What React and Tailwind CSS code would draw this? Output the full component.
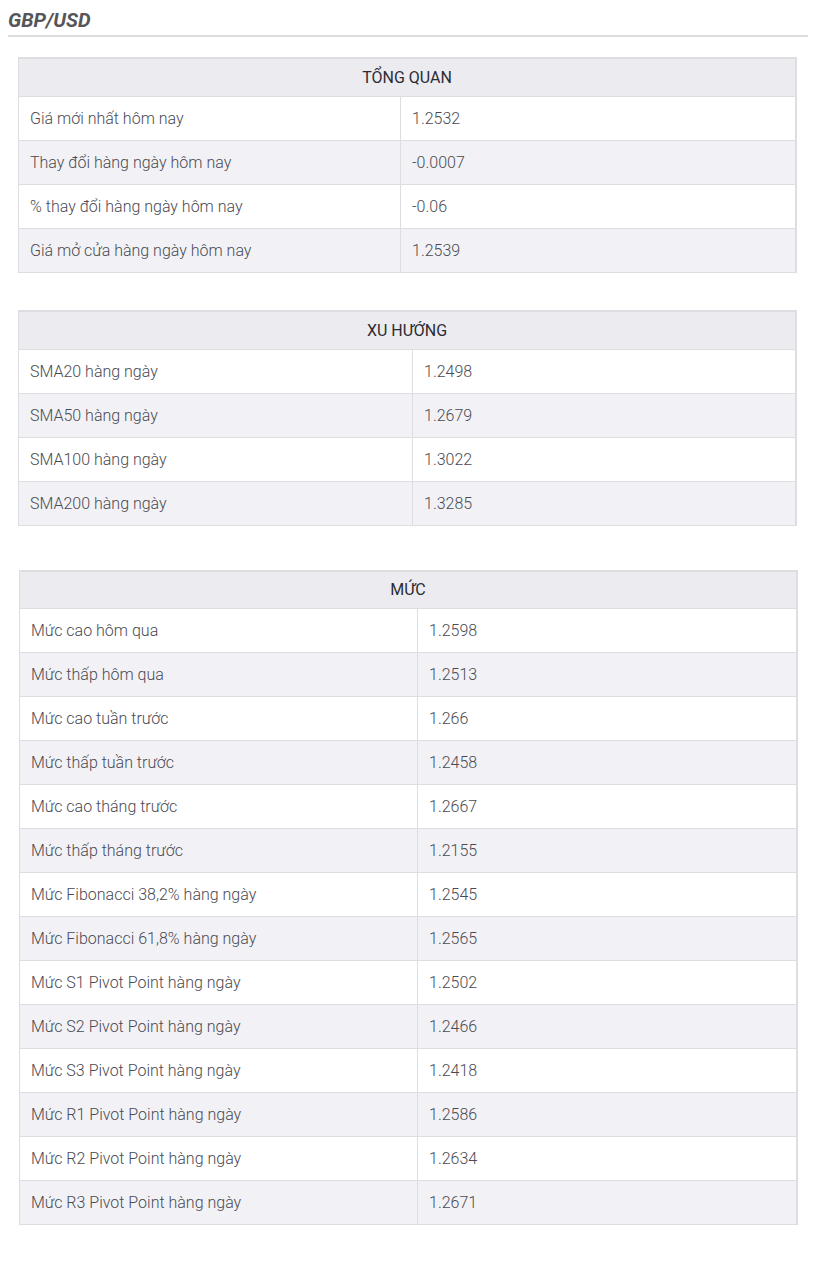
import React from 'react';

const SECTIONS = [
  {
    title: 'TỔNG QUAN',
    wrap: 'ml-[18px] w-[779px] mt-[20px]',
    head: 'h-[38px]',
    col: 'w-[382px]',
    rows: [
      ['Giá mới nhất hôm nay', '1.2532'],
      ['Thay đổi hàng ngày hôm nay', '-0.0007'],
      ['% thay đổi hàng ngày hôm nay', '-0.06'],
      ['Giá mở cửa hàng ngày hôm nay', '1.2539'],
    ],
  },
  {
    title: 'XU HƯỚNG',
    wrap: 'ml-[18px] w-[779px] mt-[37px]',
    head: 'h-[38px]',
    col: 'w-[394px]',
    rows: [
      ['SMA20 hàng ngày', '1.2498'],
      ['SMA50 hàng ngày', '1.2679'],
      ['SMA100 hàng ngày', '1.3022'],
      ['SMA200 hàng ngày', '1.3285'],
    ],
  },
  {
    title: 'MỨC',
    wrap: 'ml-[19px] w-[779px] mt-[44px]',
    head: 'h-[37px]',
    col: 'w-[398px]',
    rows: [
      ['Mức cao hôm qua', '1.2598'],
      ['Mức thấp hôm qua', '1.2513'],
      ['Mức cao tuần trước', '1.266'],
      ['Mức thấp tuần trước', '1.2458'],
      ['Mức cao tháng trước', '1.2667'],
      ['Mức thấp tháng trước', '1.2155'],
      ['Mức Fibonacci 38,2% hàng ngày', '1.2545'],
      ['Mức Fibonacci 61,8% hàng ngày', '1.2565'],
      ['Mức S1 Pivot Point hàng ngày', '1.2502'],
      ['Mức S2 Pivot Point hàng ngày', '1.2466'],
      ['Mức S3 Pivot Point hàng ngày', '1.2418'],
      ['Mức R1 Pivot Point hàng ngày', '1.2586'],
      ['Mức R2 Pivot Point hàng ngày', '1.2634'],
      ['Mức R3 Pivot Point hàng ngày', '1.2671'],
    ],
  },
];

const Section = ({ title, wrap, head, col, rows }) => (
  <div className={`${wrap} border-l border-t-2 border-r-2 border-[#dedee2]`}>
    <div className={`${head} flex items-center justify-center bg-[#ebebf0] border-b border-[#dedee2] text-[16px] text-[#2b2b33]`}>
      {title}
    </div>
    {rows.map(([label, value], i) => (
      <div
        key={label}
        className={`flex h-[44px] text-[16px] font-light text-[#4a4a52] border-b border-[#dedee2] ${i % 2 ? 'bg-[#f2f2f6]' : 'bg-white'}`}
      >
        <div className={`${col} shrink-0 flex items-center pl-[11px] border-r border-[#dedee2]`}>{label}</div>
        <div className="flex-1 flex items-center pl-[11px]">{value}</div>
      </div>
    ))}
  </div>
);

export default function App() {
  return (
    <div className="w-[816px] h-[1268px] bg-white px-2 pt-[7px]" style={{ fontFamily: 'Roboto, "Noto Sans", sans-serif' }}>
      <h1 className="text-[20px] leading-[26px] font-bold italic text-[#55555a] pb-[2px] border-b-2 border-[#dddddd]">
        GBP/USD
      </h1>
      <div className="-mx-2">
        {SECTIONS.map((s) => (
          <Section key={s.title} {...s} />
        ))}
      </div>
    </div>
  );
}
